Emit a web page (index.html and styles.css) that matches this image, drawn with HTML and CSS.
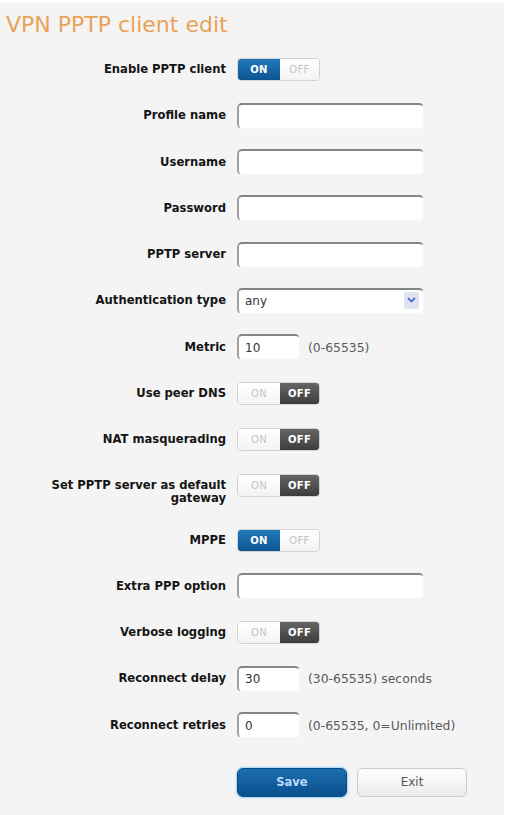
FILE: index.html
```html
<!DOCTYPE html>
<html lang="en">
<head>
<meta charset="utf-8">
<title>VPN PPTP client edit</title>
<link rel="stylesheet" href="styles.css">
</head>
<body>
<div class="page">
  <h1 class="title">VPN PPTP client edit</h1>
  <form class="form">
    <div class="row">
      <label class="lbl">Enable PPTP client</label>
      <div class="ctl"><span class="toggle is-on"><span class="seg seg-on">ON</span><span class="seg seg-off">OFF</span></span></div>
    </div>
    <div class="row">
      <label class="lbl">Profile name</label>
      <div class="ctl"><span class="field wide"></span></div>
    </div>
    <div class="row">
      <label class="lbl">Username</label>
      <div class="ctl"><span class="field wide"></span></div>
    </div>
    <div class="row">
      <label class="lbl">Password</label>
      <div class="ctl"><span class="field wide"></span></div>
    </div>
    <div class="row">
      <label class="lbl">PPTP server</label>
      <div class="ctl"><span class="field wide"></span></div>
    </div>
    <div class="row">
      <label class="lbl">Authentication type</label>
      <div class="ctl">
        <span class="field wide select">
          <span class="value">any</span>
          <span class="arrow"><svg width="9" height="6" viewBox="0 0 9 6"><path d="M1 1 L4.5 4.5 L8 1" fill="none" stroke="#4d6fcf" stroke-width="1.8"/></svg></span>
        </span>
      </div>
    </div>
    <div class="row">
      <label class="lbl">Metric</label>
      <div class="ctl"><span class="field short"><span class="value">10</span></span><span class="hint">(0-65535)</span></div>
    </div>
    <div class="row">
      <label class="lbl">Use peer DNS</label>
      <div class="ctl"><span class="toggle is-off"><span class="seg seg-on">ON</span><span class="seg seg-off">OFF</span></span></div>
    </div>
    <div class="row">
      <label class="lbl">NAT masquerading</label>
      <div class="ctl"><span class="toggle is-off"><span class="seg seg-on">ON</span><span class="seg seg-off">OFF</span></span></div>
    </div>
    <div class="row tall">
      <label class="lbl">Set PPTP server as default gateway</label>
      <div class="ctl"><span class="toggle is-off"><span class="seg seg-on">ON</span><span class="seg seg-off">OFF</span></span></div>
    </div>
    <div class="row">
      <label class="lbl">MPPE</label>
      <div class="ctl"><span class="toggle is-on"><span class="seg seg-on">ON</span><span class="seg seg-off">OFF</span></span></div>
    </div>
    <div class="row">
      <label class="lbl">Extra PPP option</label>
      <div class="ctl"><span class="field wide"></span></div>
    </div>
    <div class="row">
      <label class="lbl">Verbose logging</label>
      <div class="ctl"><span class="toggle is-off"><span class="seg seg-on">ON</span><span class="seg seg-off">OFF</span></span></div>
    </div>
    <div class="row">
      <label class="lbl">Reconnect delay</label>
      <div class="ctl"><span class="field short"><span class="value">30</span></span><span class="hint">(30-65535) seconds</span></div>
    </div>
    <div class="row">
      <label class="lbl">Reconnect retries</label>
      <div class="ctl"><span class="field short"><span class="value">0</span></span><span class="hint">(0-65535, 0=Unlimited)</span></div>
    </div>
    <div class="row actions">
      <span></span>
      <div class="ctl buttons">
        <button type="button" class="btn btn-save">Save</button>
        <button type="button" class="btn btn-exit">Exit</button>
      </div>
    </div>
  </form>
</div>
</body>
</html>
```

FILE: styles.css
```css
html, body {
  margin: 0;
  padding: 0;
  background: #ffffff;
}

body {
  font-family: "DejaVu Sans", Verdana, sans-serif;
  color: #1e1e1e;
}

.page {
  margin: 3px 5px 0 0;
  min-height: 812px;
  background: #f4f4f4;
}

.title {
  margin: 0;
  padding: 9.4px 0 0 6px;
  font-size: 22px;
  line-height: 26px;
  font-weight: normal;
  color: #e9a257;
}

.form {
  margin-top: 8px;
}

.row {
  display: grid;
  grid-template-columns: 226px 1fr;
  column-gap: 11px;
  align-items: center;
  height: 46.25px;
}

.row.tall {
  height: 54.25px;
  align-items: start;
}

.row.tall .lbl {
  padding-top: 16.6px;
}

.row.tall .ctl {
  padding-top: 11.6px;
}

.lbl {
  text-align: right;
  font-size: 11.6px;
  font-weight: bold;
  line-height: 13px;
  color: #141414;
}

.ctl {
  display: flex;
  align-items: center;
}

/* ON / OFF switch */
.toggle {
  display: inline-flex;
  height: 23px;
  border: 1px solid #d2d2d2;
  border-radius: 4px;
  overflow: hidden;
  box-sizing: border-box;
  background: #fff;
}

.seg {
  display: flex;
  align-items: center;
  justify-content: center;
  font-size: 10px;
  font-weight: bold;
  letter-spacing: 0.3px;
}

.seg-on {
  width: 42px;
}

.seg-off {
  width: 39px;
}

.is-on .seg-on {
  background: linear-gradient(#2279ba, #0d5592);
  color: #ffffff;
}

.is-on .seg-off {
  background: linear-gradient(#ffffff, #f3f3f3);
  color: #c4c4c4;
  font-weight: normal;
}

.is-off .seg-on {
  background: linear-gradient(#ffffff, #f3f3f3);
  color: #c4c4c4;
  font-weight: normal;
}

.is-off .seg-off {
  background: linear-gradient(#666666, #3c3c3c);
  color: #ffffff;
}

/* text fields */
.field {
  display: flex;
  align-items: center;
  box-sizing: border-box;
  height: 26px;
  background: #ffffff;
  border: 1px solid #f7f7f7;
  border-top: 2px solid #858585;
  border-left: 2px solid #a0a0a0;
  border-radius: 5px;
}

.field.wide {
  width: 187px;
}

.field.short {
  width: 63px;
}

.value {
  padding-left: 6px;
  font-size: 12px;
  color: #333;
}

.select {
  justify-content: space-between;
  padding-right: 4px;
}

.arrow {
  display: flex;
  align-items: center;
  justify-content: center;
  width: 15px;
  height: 17px;
  margin-top: -2px;
  background: #dfe4f3;
  border-radius: 2px;
}

.hint {
  margin-left: 8px;
  font-size: 12.4px;
  color: #5a5a5a;
}

/* action buttons */
.row.actions {
  height: auto;
  padding-top: 19.4px;
}

.buttons {
  gap: 10px;
}

.btn {
  width: 110px;
  height: 29px;
  border-radius: 6px;
  font-family: "DejaVu Sans", Verdana, sans-serif;
  font-size: 11.5px;
  padding: 0;
  cursor: pointer;
}

.btn-save {
  border: 1px solid #0a4a84;
  background: linear-gradient(#1d6eb0, #0b4f8c);
  color: #b9dbff;
  font-weight: bold;
  box-shadow: 0 0 2px 1px #9fd3f5;
}

.btn-exit {
  border: 1px solid #c9c9c9;
  background: linear-gradient(#ffffff, #ececec);
  color: #555555;
  font-size: 12px;
}
```
